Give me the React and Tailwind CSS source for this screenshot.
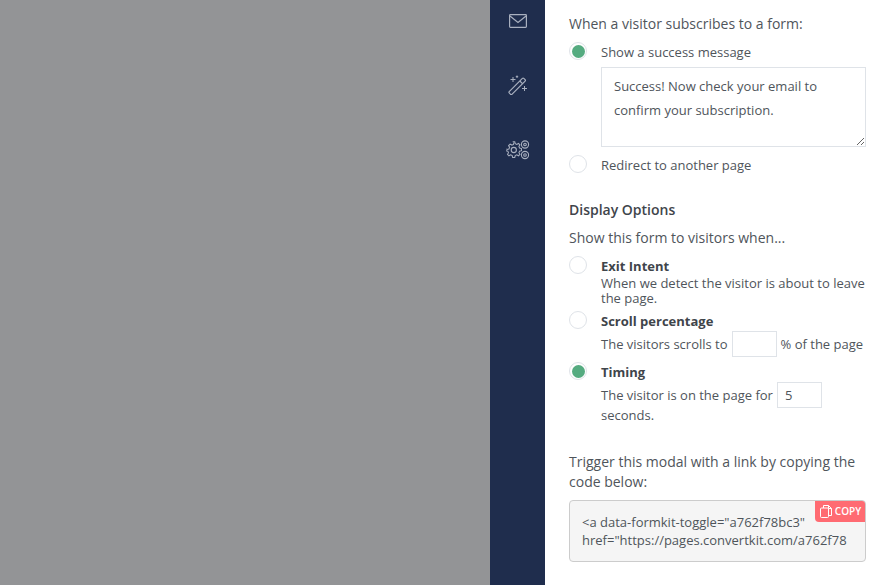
const iconColor = '#a9b0bf';

function Radio({ checked }) {
    return (
        <span className="w-[18px] h-[18px] rounded-full border border-[#dfe3e8] bg-white flex items-center justify-center shrink-0">
            {checked && <span className="w-[13px] h-[13px] rounded-full bg-[#55ab80]"></span>}
        </span>
    );
}

function MailIcon() {
    return (
        <svg width="20" height="16" viewBox="0 0 20 16" fill="none" stroke={iconColor} strokeWidth="1.2">
            <rect x="1.6" y="1.6" width="16.8" height="12.8" rx="0.8" />
            <path d="M2 3l8 6.5L18 3" />
        </svg>
    );
}

function WandIcon() {
    return (
        <svg width="20" height="20" viewBox="0 0 20 20" fill="none" stroke={iconColor} strokeWidth="1.2">
            <path d="M1.2 16.6L14.4 3.4a1 1 0 0 1 1.4 0l1.3 1.3a1 1 0 0 1 0 1.4L3.9 19.3a.9.9 0 0 1-1.3 0l-1.4-1.4a.9.9 0 0 1 0-1.3z" />
            <path d="M11.8 6l2.7 2.7" />
            <path d="M5 2v5M2.5 4.5h5M9 .5v2.4M7.8 1.7h2.4M16.5 11v5M14 13.5h5" strokeWidth="1" />
        </svg>
    );
}

function GearsIcon() {
    return (
        <svg width="24" height="20" viewBox="0 0 24 20" fill="none" stroke={iconColor} strokeWidth="1.1">
            <path d="M6.6 3.5h2.2l.5 2 1.6.7 1.8-1 1.5 1.5-1 1.8.7 1.6 2 .5v2.2l-2 .5-.7 1.6 1 1.8-1.5 1.5-1.8-1-1.6.7-.5 2H6.6l-.5-2-1.6-.7-1.8 1-1.5-1.5 1-1.8-.7-1.6-2-.5v-2.2" transform="translate(.4 -1.5) scale(.95)" />
            <path d="M.5 9.5l2-.5.7-1.6-1-1.8 1.5-1.5 1.8 1 1.6-.7.5-2" transform="translate(.4 0)" />
            <circle cx="7.8" cy="10" r="2.6" />
            <circle cx="19" cy="4.5" r="3.6" />
            <circle cx="19" cy="4.5" r="1.3" />
            <circle cx="19" cy="15" r="3.6" />
            <circle cx="19" cy="15" r="1.3" />
        </svg>
    );
}

export default function App() {
    return (
        <div className="flex h-[585px] w-[875px] overflow-hidden font-['Open_Sans',sans-serif] text-[13px] text-[#4f555b]">
            <div className="w-[490px] bg-[#939496]"></div>

            <div className="w-[55px] bg-[#1f2d4d] flex flex-col items-center pt-[13px]">
                <MailIcon />
                <div className="mt-[46px] ml-px">
                    <WandIcon />
                </div>
                <div className="mt-[45px]">
                    <GearsIcon />
                </div>
            </div>

            <div className="w-[330px] bg-white pl-[24px] pr-[9px]">
                <p className="text-[14px] leading-[20px] mt-[14px]">When a visitor subscribes to a form:</p>

                <div className="flex gap-[14px] mt-[8px] h-[20px] leading-[20px]">
                    <Radio checked />
                    <span>Show a success message</span>
                </div>
                <textarea
                    readOnly
                    className="block ml-[32px] mt-[5px] w-[265px] h-[80px] border border-[#dfe3e8] px-[12px] py-[6px] leading-[24px] outline-none"
                    value="Success! Now check your email to confirm your subscription."
                />
                <div className="flex gap-[14px] mt-[8px] h-[20px] leading-[20px]">
                    <Radio />
                    <span>Redirect to another page</span>
                </div>

                <h3 className="text-[14px] font-semibold leading-[20px] mt-[25px] text-[#3f454b]">Display Options</h3>
                <p className="text-[14px] leading-[20px] mt-[8px]">Show this form to visitors when...</p>

                <div className="flex gap-[14px] mt-[8px]">
                    <Radio />
                    <div>
                        <div className="font-bold text-[#3f454b] mt-[2px] leading-[16px]">Exit Intent</div>
                        <div className="mt-[2px] leading-[15px]">When we detect the visitor is about to leave the page.</div>
                    </div>
                </div>

                <div className="flex gap-[14px] mt-[5px]">
                    <Radio />
                    <div>
                        <div className="font-bold text-[#3f454b] leading-[18px] mt-px">Scroll percentage</div>
                        <div className="flex items-center gap-[4px] mt-px whitespace-nowrap">
                            <span className="pt-[2px]">The visitors scrolls to</span>
                            <span className="w-[45px] h-[26px] border border-[#dfe3e8]"></span>
                            <span className="pt-[2px]">% of the page</span>
                        </div>
                    </div>
                </div>

                <div className="flex gap-[14px] mt-[5px]">
                    <Radio checked />
                    <div>
                        <div className="font-bold text-[#3f454b] leading-[18px] mt-px">Timing</div>
                        <div className="flex items-center gap-[4px] mt-px whitespace-nowrap">
                            <span className="pt-[2px]">The visitor is on the page for</span>
                            <span className="w-[45px] h-[26px] border border-[#dfe3e8] pl-[7px] leading-[24px]">5</span>
                        </div>
                        <div className="leading-[14px]">seconds.</div>
                    </div>
                </div>

                <p className="text-[14px] leading-[20px] mt-[30px]">Trigger this modal with a link by copying the code below:</p>

                <div className="relative mt-[8px] h-[62px] w-[297px] rounded-[4px] border border-[#cccccc] bg-[#f5f5f5] pl-[12px] pt-[12px] leading-[18px] whitespace-nowrap overflow-hidden">
                    <div>{'<a data-formkit-toggle="a762f78bc3"'}</div>
                    <div>{'href="https://pages.convertkit.com/a762f78'}</div>
                    <div className="absolute -top-px -right-px h-[22px] w-[51px] bg-[#ff6b72] rounded-bl-[4px] rounded-tr-[4px] flex items-center justify-center gap-[3px] text-white text-[10px] font-semibold">
                        <svg width="12" height="13" viewBox="0 0 12 13" fill="none" stroke="white" strokeWidth="1">
                            <path d="M3.5 3V.5h5l3 3v7h-3" />
                            <path d="M8.5.5v3h3" />
                            <rect x="0.5" y="3" width="8" height="9.5" rx="1" />
                        </svg>
                        COPY
                    </div>
                </div>
            </div>
        </div>
    );
}
